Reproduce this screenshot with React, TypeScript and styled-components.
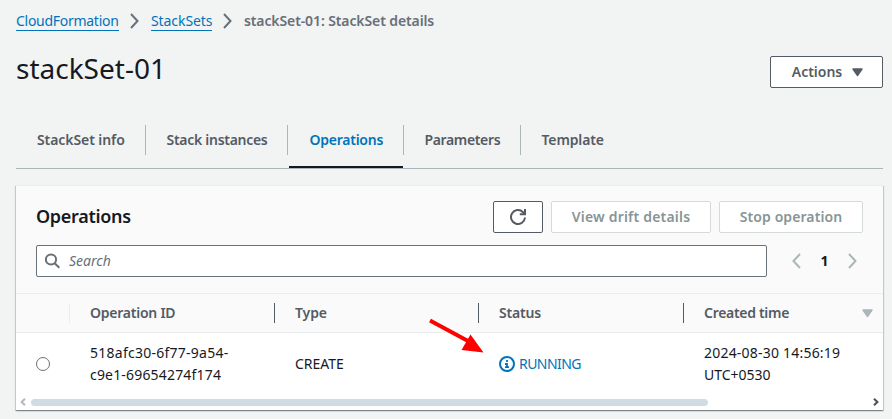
import React from 'react';
import styled, { createGlobalStyle } from 'styled-components';

const Global = createGlobalStyle`
  *, *::before, *::after { box-sizing: border-box; }
  body { margin: 0; background: #f2f3f3; color: #16191f; font: 400 14px/22px "Noto Sans", "Open Sans", sans-serif; overflow: hidden; }
  svg { display: block; flex: none; }
`;

const Page = styled.main`
  width: 892px;
  height: 419px;
  padding: 10px 9px 0 16px;
`;

const Text = styled.span<{ $track?: number }>`
  letter-spacing: ${p => p.$track ?? 0}px;
  white-space: nowrap;
`;

const Breadcrumbs = styled.nav`
  display: flex;
  align-items: center;
  height: 22px;
  color: #687078;
`;

const Crumb = styled.a<{ $width: number; $track: number }>`
  width: ${p => p.$width}px;
  height: 20px;
  line-height: 20px;
  margin-bottom: 1px;
  border-bottom: 1px solid #0073bb;
  color: #0073bb;
  letter-spacing: ${p => p.$track}px;
  white-space: nowrap;
`;

const CrumbArrow = styled.span`
  width: 32px;
  padding-left: 11px;
`;

const CurrentCrumb = styled(Text)`
  font-weight: 600;
`;

const TitleBar = styled.header`
  display: flex;
  justify-content: space-between;
  align-items: flex-start;
  height: 93px;
  padding-top: 24px;
`;

const Title = styled.h1`
  margin: -6px 0 0;
  font-size: 28px;
  font-weight: 400;
  line-height: 36px;
`;

const Button = styled.button<{ $width: number; $disabled?: boolean }>`
  display: flex;
  align-items: center;
  justify-content: center;
  gap: 10px;
  width: ${p => p.$width}px;
  height: 32px;
  padding: 0;
  border: 1px solid ${p => (p.$disabled ? '#d5dbdb' : '#545b64')};
  border-radius: 2px;
  background: #fff;
  color: ${p => (p.$disabled ? '#879596' : '#545b64')};
  font: inherit;
  font-weight: 600;
`;

const ActionsButton = styled(Button)`
  padding-left: 2px;
`;

const Tabs = styled.div`
  display: flex;
  align-items: flex-start;
  width: 867px;
  height: 44px;
  border-bottom: 1px solid #aab7b8;
`;

const Tab = styled.div<{ $width: number; $active?: boolean }>`
  display: flex;
  flex-direction: column;
  justify-content: space-between;
  width: ${p => p.$width}px;
  height: 43px;
  margin-left: ${p => (p.$active ? 1 : 0)}px;
  color: ${p => (p.$active ? '#0073bb' : '#545b64')};
  font-weight: 600;
`;

const TabLabel = styled.div<{ $divider: boolean; $pad: number }>`
  height: 30px;
  padding-left: ${p => p.$pad}px;
  line-height: 30px;
  border-right: 1px solid ${p => (p.$divider ? '#aab7b8' : 'transparent')};
`;

const TabMarker = styled.div`
  height: 2px;
  margin-right: 1px;
  background: #16191f;
`;

const Panel = styled.section`
  position: relative;
  width: 867px;
  height: 225px;
  margin-top: 16px;
  background: #fff;
  border-top: 1px solid #eaeded;
  box-shadow: 0 1px 1px 0 rgba(0, 28, 36, 0.3), 1px 1px 1px 0 rgba(0, 28, 36, 0.15), -1px 1px 1px 0 rgba(0, 28, 36, 0.15);
`;

const PanelHead = styled.div`
  height: 108px;
  padding: 15px 20px 0;
  background: #fafafa;
  border-bottom: 1px solid #eaeded;
`;

const HeadRow = styled.div`
  display: flex;
  align-items: center;
  justify-content: space-between;
  height: 32px;
`;

const Heading = styled.h2`
  margin: -3px 0 0;
  font-size: 18px;
  font-weight: 600;
  letter-spacing: -0.3px;
`;

const Buttons = styled.div`
  display: flex;
  gap: 8px;
`;

const FilterRow = styled.div`
  display: flex;
  align-items: center;
  height: 32px;
  margin-top: 12px;
`;

const SearchBox = styled.div`
  display: flex;
  align-items: center;
  gap: 8px;
  width: 731px;
  height: 32px;
  padding-left: 8px;
  background: #fff;
  border: 1px solid #687078;
  border-radius: 2px;
  color: #687078;
  font-style: italic;
`;

const Pager = styled.div`
  display: flex;
  align-items: center;
  width: 65px;
  margin-left: 25px;
  justify-content: space-between;
  color: #aab7b8;
`;

const PageNumber = styled.b`
  font-weight: 700;
  color: #16191f;
`;

const Columns = styled.div`
  display: grid;
  grid-template-columns: 54px 205px 204px 205px 199px;
`;

const HeaderRow = styled(Columns)`
  height: 39px;
  background: #fafafa;
  border-bottom: 1px solid #eaeded;
  align-items: center;
  color: #545b64;
  font-weight: 600;
`;

const HeaderCell = styled.div<{ $line?: string }>`
  display: flex;
  align-items: center;
  justify-content: space-between;
  height: 20px;
  padding: 0 9px 0 20px;
  border-right: 1px solid ${p => p.$line ?? 'transparent'};
`;

const DataRow = styled(Columns)`
  height: 61px;
  align-items: center;
`;

const Cell = styled.div`
  display: flex;
  flex-direction: column;
  padding-left: 20px;
`;

const StatusCell = styled.div`
  display: flex;
  align-items: center;
  gap: 4px;
  padding-left: 20px;
  color: #0073bb;
`;

const Radio = styled.span`
  width: 14px;
  height: 14px;
  margin-left: 20px;
  border: 1px solid #687078;
  border-radius: 50%;
`;

const ScrollRow = styled.div`
  display: flex;
  align-items: center;
  justify-content: space-between;
  height: 8px;
  margin-top: 4px;
  padding: 0 4px;
`;

const ScrollThumb = styled.div`
  width: 677px;
  height: 7px;
  margin: 0 auto 0 5px;
  border-radius: 4px;
  background: #d1dbe4;
`;

const Pointer = styled.svg`
  position: absolute;
  left: 412px;
  top: 131px;
`;

const Chevron = ({ left = false }: { left?: boolean }) => (
  <svg width="9" height="16" viewBox="0 0 9 16" fill="none" stroke="currentColor" strokeWidth="2">
    <path d={left ? 'M8 1 1.5 8 8 15' : 'M1 1 7.5 8 1 15'} />
  </svg>
);

const Caret = ({ color }: { color: string }) => (
  <svg width="11" height="9" viewBox="0 0 11 9">
    <path d="M1 1h9L5.5 7.5z" fill={color} stroke={color} strokeWidth="1.4" strokeLinejoin="round" />
  </svg>
);

const ScrollArrow = ({ left = false }: { left?: boolean }) => (
  <svg width="6" height="8" viewBox="0 0 6 8" fill="none" stroke={left ? '#b5b9bb' : '#505050'} strokeWidth="2">
    <path d={left ? 'M5 .8 1.6 4 5 7.2' : 'M1 .8 4.4 4 1 7.2'} />
  </svg>
);

const tabs = [
  { label: 'StackSet info', width: 130, pad: 21, track: -0.08 },
  { label: 'Stack instances', width: 142, pad: 20.5, track: -0.28 },
  { label: 'Operations', width: 115, pad: 20.5, track: -0.25, active: true },
  { label: 'Parameters', width: 117, pad: 20.5, track: -0.36 },
  { label: 'Template', width: 120, pad: 20.5, track: -0.13 },
];

export default function App() {
  return (
    <Page>
      <Global />
      <Breadcrumbs>
        <Crumb $width={103} $track={-0.28}>CloudFormation</Crumb>
        <CrumbArrow><Chevron /></CrumbArrow>
        <Crumb $width={61} $track={-0.08}>StackSets</Crumb>
        <CrumbArrow><Chevron /></CrumbArrow>
        <CurrentCrumb $track={-0.11}>stackSet-01: StackSet details</CurrentCrumb>
      </Breadcrumbs>
      <TitleBar>
        <Title>stackSet-01</Title>
        <ActionsButton $width={113}><Text>Actions</Text><Caret color="#545b64" /></ActionsButton>
      </TitleBar>
      <Tabs>
        {tabs.map((t, i) => (
          <Tab key={t.label} $width={t.width} $active={t.active}>
            <TabLabel $divider={i < tabs.length - 1} $pad={t.pad}>
              <Text $track={t.track}>{t.label}</Text>
            </TabLabel>
            {t.active && <TabMarker />}
          </Tab>
        ))}
      </Tabs>
      <Panel>
        <PanelHead>
          <HeadRow>
            <Heading>Operations</Heading>
            <Buttons>
              <Button $width={50} aria-label="Refresh">
                <svg width="16" height="16" viewBox="0 0 16 16" fill="none" stroke="#545b64" strokeWidth="2">
                  <path d="M15 8.5a7 7 0 1 1-2.2-5.6L15 5" />
                  <path d="M15 0v5.2H9.8" />
                </svg>
              </Button>
              <Button $width={160} $disabled><Text $track={0.2}>View drift details</Text></Button>
              <Button $width={144} $disabled><Text $track={0.08}>Stop operation</Text></Button>
            </Buttons>
          </HeadRow>
          <FilterRow>
            <SearchBox>
              <svg width="16" height="16" viewBox="0 0 16 16" fill="none" stroke="#687078" strokeWidth="2">
                <circle cx="6" cy="6.5" r="5.1" />
                <path d="m9.7 10.2 4.6 4.6" />
              </svg>
              <Text>Search</Text>
            </SearchBox>
            <Pager><Chevron left /><PageNumber>1</PageNumber><Chevron /></Pager>
          </FilterRow>
        </PanelHead>
        <HeaderRow>
          <HeaderCell $line="#eaeded" />
          <HeaderCell $line="#545b64"><Text $track={-0.24}>Operation ID</Text></HeaderCell>
          <HeaderCell $line="#545b64"><Text $track={-0.1}>Type</Text></HeaderCell>
          <HeaderCell $line="#545b64"><Text $track={-0.2}>Status</Text></HeaderCell>
          <HeaderCell><Text $track={-0.3}>Created time</Text><Caret color="#aab7b8" /></HeaderCell>
        </HeaderRow>
        <DataRow>
          <Radio />
          <Cell><Text $track={0.25}>518afc30-6f77-9a54-</Text><Text $track={0.18}>c9e1-69654274f174</Text></Cell>
          <Cell><Text>CREATE</Text></Cell>
          <StatusCell>
            <svg width="16" height="16" viewBox="0 0 16 16" fill="none" stroke="#0073bb" strokeWidth="2">
              <circle cx="8" cy="8" r="7" />
              <path d="M8 4v2M6 8h2v4M6 11.2h4" strokeWidth="1.8" />
            </svg>
            <Text $track={-0.55}>RUNNING</Text>
          </StatusCell>
          <Cell><Text $track={0.21}>2024-08-30 14:56:19</Text><Text>UTC+0530</Text></Cell>
        </DataRow>
        <ScrollRow><ScrollArrow left /><ScrollThumb /><ScrollArrow /></ScrollRow>
        <Pointer width="60" height="40" viewBox="0 0 60 40">
          <path d="m2 3.5 38 20.5" stroke="#f00" strokeWidth="4" />
          <path d="M55.5 35.5 33.5 33 42.5 17.5z" fill="#f00" />
        </Pointer>
      </Panel>
    </Page>
  );
}
